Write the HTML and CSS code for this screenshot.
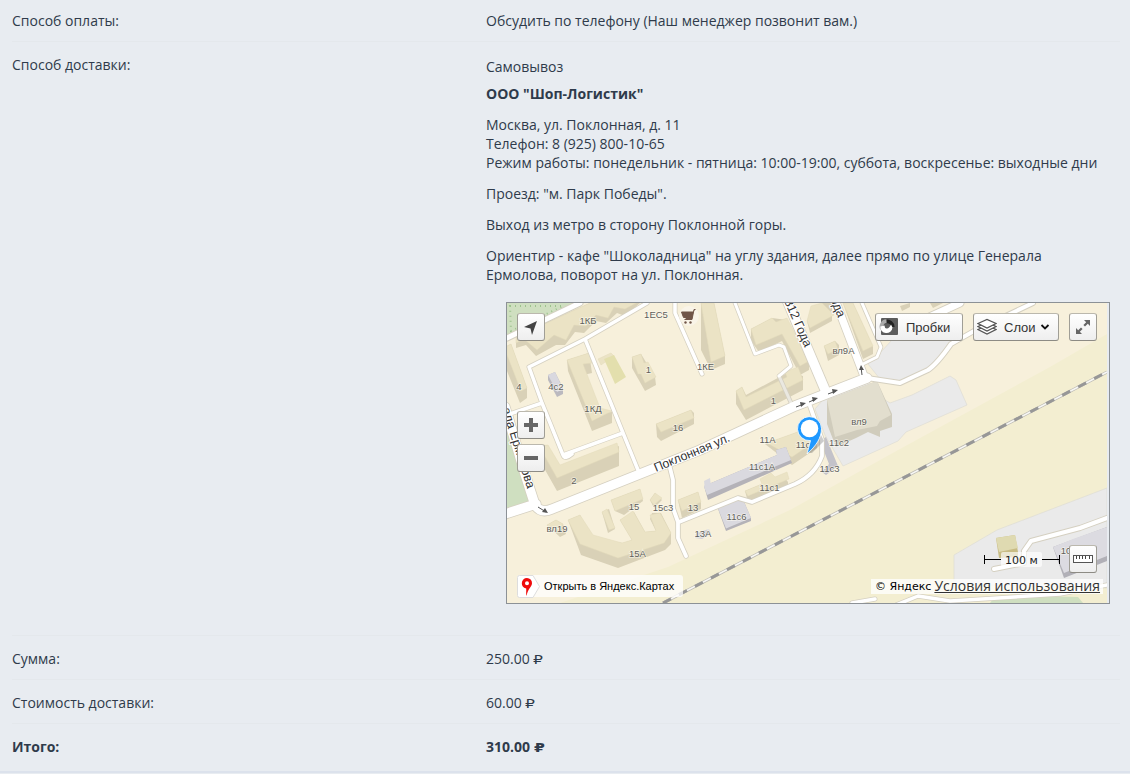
FILE: index.html
```html
<!DOCTYPE html>
<html lang="ru">
<head>
<meta charset="utf-8">
<title>Заказ</title>
<link rel="stylesheet" href="styles.css">
</head>
<body>
<main class="order">
  <div class="row row-first"><div class="label">Способ оплаты:</div><div class="value">Обсудить по телефону (Наш менеджер позвонит вам.)</div></div>
  <div class="row row-delivery">
    <div class="label">Способ доставки:</div>
    <div class="value delivery">
      <div class="method">Самовывоз</div>
      <div class="company">ООО "Шоп-Логистик"</div>
      <p>Москва, ул. Поклонная, д. 11<br>Телефон: 8 (925) 800-10-65<br>Режим работы: понедельник - пятница: 10:00-19:00, суббота, воскресенье: выходные дни</p>
      <p>Проезд: "м. Парк Победы".</p>
      <p>Выход из метро в сторону Поклонной горы.</p>
      <p>Ориентир - кафе "Шоколадница" на углу здания, далее прямо по улице Генерала<br>Ермолова, поворот на ул. Поклонная.</p>
      <div class="map">
        <svg class="canvas" viewBox="507 303 600 300" width="600" height="300">
          <rect x="507" y="303" width="600" height="300" fill="#f7f0db"/>
          <path d="M1107 334L1050 367L900 449L790 510L668 567L560 603H1107Z" fill="#f3eed1"/>
          <path d="M507 303H575L507 335Z" fill="#cfdfc0"/>
          <path d="M510 306H563L511 331Z" fill="none" stroke="#9dc38d" stroke-width="2" stroke-dasharray="1 4"/>
          <path d="M507 415L536 503L507 512Z" fill="#cfdfc0"/>
          <g fill="#eaeaea" stroke="#dedcd4" stroke-width=".7">
            <path d="M815 409L828 394L868 381L880 397L890 403L912 395L950 376L956 380L967 405L906 432L898 441L843 466L825 435Z"/>
            <path d="M868 364L880 353L892 340H952L934 365L902 382L880 379Z"/>
            <path d="M954 584V555L997 530L1107 488V588Z"/>
          </g>
          <path d="M990 603L993 599L1040 596L1078 597L1083 603Z" fill="#cfdfc0"/>
          <g class="walls">
            <path d="M516 348L526 345L536 356L556 345L565 345L575 332L584 333L596 321L606 323L617 313L625 316L640 303H590L516 337Z"/>
            <path d="M507 346L511 344L527 388V398L520 403L507 371Z"/>
            <path d="M567 360L589 353L592 373L583 375L600 413L612 412V423L592 431L568 371Z"/>
            <path d="M632 357L641 354L655 377L656 385L645 391L632 368Z"/>
            <path d="M656 424L691 410L694 413V424L661 441L657 437Z"/>
            <path d="M701 303H714L725 356V364L711 370L701 350Z"/>
            <path d="M751 329L772 318L787 320L809 361V370L800 375L782 341L759 352L751 341Z"/>
            <path d="M736 391L742 387L746 395L787 373L803 376V390L746 420L736 404Z"/>
            <path d="M807 321L822 303H832V321L810 333Z"/>
            <path d="M824 346L835 341L839 345V355L828 361Z"/>
            <path d="M843 303H853L873 347V354L863 359Z"/>
            <path d="M539 446L548 445L555 470L619 446V466L557 491L544 468Z"/>
            <path d="M568 520L580 515L593 540L623 543L632 540L620 520L634 512L645 532L656 531L650 519L652 513L661 513L671 533V544L665 550L618 568L581 555Z"/>
            <path d="M611 500L640 489L643 501L624 515L615 511Z"/>
            <path d="M602 512L609 509L615 529L608 533Z"/>
            <path d="M650 500L655 493L662 500L654 508Z"/>
            <path d="M678 500L698 492L701 503V509L682 518Z"/>
            <path d="M547 525L556 520L563 524L566 534L560 537Z"/>
            <path d="M745 491L762 484L784 477L788 482V486L748 502Z"/>
            <path d="M765 444L806 429L817 436V448L792 465Z"/>
            <path d="M900 306L910 303V307L902 311Z"/>
            <path d="M930 303H943L933 308Z"/>
          </g>
          <path d="M827 400L877 381L892 414V427L880 431V437L868 432L856 438L836 447L827 424Z" fill="#d0ccbc"/>
          <path d="M827 400L877 381L891 415L880 421L877 426L857 430L835 437Z" fill="#e2dece"/>
          <g class="roofs">
            <path d="M516 343L524 339L537 350L554 335L566 340L574 325L586 326L596 315L608 318L614 307L625 309L636 303H590L516 337Z"/>
            <path d="M507 346L511 344L527 388L521 391L507 355Z"/>
            <path d="M567 360L589 353L592 363L583 364L600 408L612 411L592 421Z"/>
            <path d="M598 359L611 353L614 356L601 365Z"/>
            <path d="M632 357L641 354L644 363L648 362L656 377L645 383L641 374H638Z"/>
            <path d="M656 424L691 410L694 418L661 432Z"/>
            <path d="M701 303H714L725 356L711 362Z"/>
            <path d="M751 329L772 318L776 322L787 318L809 361L800 366L782 334L756 345Z"/>
            <path d="M736 391L742 387L746 397L787 377L785 372L798 367L803 380L744 410Z"/>
            <path d="M807 321L811 306L822 303L834 315L810 328Z"/>
            <path d="M824 346L835 341L838 349L828 354Z"/>
            <path d="M843 303H853L873 346L863 351Z"/>
            <path d="M539 446L548 445L560 465L617 443L619 452L557 478Z"/>
            <path d="M568 520L580 515L593 535L622 543L632 540L620 520L633 511L645 532L656 531L650 515L660 513L671 533L664 543L618 558L580 544Z"/>
            <path d="M611 500L640 489L643 499L615 511Z"/>
            <path d="M602 512L607 509L615 528L609 530Z"/>
            <path d="M650 500L655 493L662 498L654 505Z"/>
            <path d="M678 500L698 492L701 502L682 511Z"/>
            <path d="M547 525L556 520L563 524L561 530L550 531Z"/>
            <path d="M745 491L762 484L760 479L771 473L775 477L787 472L789 479L748 496Z"/>
            <path d="M767 443L806 429L817 440L792 457Z"/>
          </g>
          <path d="M604 359L614 355L626 377L615 384Z" fill="#e3dfad"/>
          <path d="M548 375L555 372L563 388V394L557 397L548 380Z" fill="#bbb9bf"/><path d="M548 375L555 372L563 389L557 392Z" fill="#d9d8df"/>
          <path d="M704 486L777 455L776 450L786 447L792 463L708 500Z" fill="#b4b2b8"/><path d="M704 486L777 455L776 450L786 447L791 460L707 495Z" fill="#dad9df"/>
          <path d="M717 506L742 497L751 518V521L726 531Z" fill="#b4b2b8"/><path d="M717 506L742 497L751 518L726 528.500Z" fill="#dad9df"/>
          <path d="M820 441L826 437L838 466L826 475L822 472L829 464Z" fill="#c3c2c9"/>
          <path d="M704 481L710 478L711 486L705 490Z" fill="#dad9df"/>
          <path d="M696 533L709 529L711 534L702 539L695 538Z" fill="#d2d1d6"/>
          <path d="M996 538L1015 535L1018 552V557L999 558Z" fill="#c8bc84"/><path d="M996 538L1015 535L1018 548L999 552Z" fill="#dfdab1"/>
          <path d="M1053 547L1107 527V561L1064 578Z" fill="#b1b0b7"/><path d="M1053 547L1073 539L1107 527V556L1064 573Z" fill="#dcdbe1"/>

          <g class="casing">
            <path d="M507 338L580 303" stroke-width="7"/>
            <path d="M563 455L542 403L529 367L585 339L647 303M507 415L542 403M585 339L638 470M563 455L623 433M563 455Q565 460 572 454M675 303V313L702 374" stroke-width="5"/>
            <path d="M735 303L755 354L779 345L784 347L791 366L779 376L792 405M862 303L881 347L877 357L863 364" stroke-width="4.5"/>
            <path d="M810 406L822 440V456Q815 475 795 484L752 502L738 498L679 522M670 468L673 480V508L678 522V538L686 556" stroke-width="5.5"/>
            <path d="M867 378L900 383L928 370Q937 364 951 344L974 331L1033 303" stroke-width="6"/>
            <path d="M925 319L960 303" stroke-width="9"/>
            <path d="M994 569L1024 563V551L1031 541L1080 528L1107 518" stroke-width="6"/>
            <path d="M852 603L875 599M896 605L918 596L950 601L1060 594L1107 585" stroke-width="5"/>
            <path d="M787 300L826 392" stroke-width="11"/>
            <path d="M835 300L864 376" stroke-width="9"/>
            <path d="M505 407L525 474L535 505Q541 514 552 509L700 450L795 406L867 378M505 514L536 504" stroke-width="11"/>
          </g>
          <g class="roads">
            <path d="M507 338L580 303" stroke-width="5"/>
            <path d="M563 455L542 403L529 367L585 339L647 303M507 415L542 403M585 339L638 470M563 455L623 433M563 455Q565 460 572 454M675 303V313L702 374" stroke-width="3.5"/>
            <path d="M735 303L755 354L779 345L784 347L791 366L779 376M862 303L881 347L877 357L863 364" stroke-width="3"/>
            <path d="M779 376L792 405" stroke-width="3" opacity=".5"/>
            <path d="M810 406L822 440V456Q815 475 795 484L752 502L738 498L679 522M670 468L673 480V508L678 522V538L686 556" stroke-width="3.8"/>
            <path d="M867 378L900 383L928 370Q937 364 951 344L974 331L1033 303" stroke-width="4"/>
            <path d="M925 319L960 303" stroke-width="7"/>
            <path d="M994 569L1024 563V551L1031 541L1080 528L1107 518" stroke-width="4"/>
            <path d="M852 603L875 599M896 605L918 596L950 601L1060 594L1107 585" stroke-width="3.5"/>
            <path d="M787 300L826 392" stroke-width="9.4"/>
            <path d="M835 300L864 376" stroke-width="7.4"/>
            <path d="M505 407L525 474L535 505Q541 514 552 509L700 450L795 406L867 378M505 514L536 504" stroke-width="9.4"/>
          </g>
          <path d="M663 603L1107 372" stroke="#bbb9b3" stroke-width="3"/>
          <path d="M663 603L1107 372" stroke="#f7f7f4" stroke-width="1.6"/>
          <path d="M663 603L1107 372" stroke="#979797" stroke-width="3" stroke-dasharray="9 9"/>
          <g stroke="#555" stroke-width="1" fill="#555">
            <path d="M796 407L804 404M809 402L816 399M828 394L836 391M862 375L861 367M538 507L546 512"/>
            <path stroke="none" d="M800 402L806 403L801 407ZM812 397L818 398L813 402ZM832 389L838 390L833 394ZM859 370L861 365L864 370ZM542 512L548 513L545 508Z"/>
          </g>
          <g class="houses">
            <text x="588" y="324">1КБ</text><text x="656" y="317.500">1ЕС5</text><text x="648.500" y="372.500">1</text><text x="705.500" y="369.500">1КЕ</text>
            <text x="519" y="390">4</text><text x="556" y="389.500">4с2</text><text x="593" y="411.500">1КД</text><text x="678" y="430.500">16</text>
            <text x="773.500" y="403.500">1</text><text x="843.500" y="353.500">вл9А</text><text x="859" y="424.500">вл9</text><text x="767.500" y="443">11А</text>
            <text x="803" y="447.500">11с</text><text x="839" y="445.500">11с2</text><text x="762" y="469.500">11с1А</text><text x="829.500" y="471.500">11с3</text>
            <text x="769.500" y="491">11с1</text><text x="736.500" y="519.500">11с6</text><text x="703" y="537">13А</text><text x="693" y="510.500">13</text>
            <text x="663" y="510.500">15с3</text><text x="634" y="509.500">15</text><text x="574" y="483.500">2</text><text x="557" y="531.500">вл19</text>
            <text x="637.500" y="556.500">15А</text><text x="1066" y="553.500">10</text>
          </g>
          <g class="streets">
            <text transform="translate(656 472) rotate(-22.500)" textLength="81">Поклонная ул.</text>
            <text transform="translate(784 301) rotate(66)">812 Года</text>
            <text transform="translate(830 299) rotate(67)">ода</text>
            <text transform="translate(502 409) rotate(72.500)" textLength="84">ала Ермолова</text>
          </g>
          <circle cx="689" cy="316" r="10" fill="#f8f4e9" opacity=".9"/>
          <path d="M695.500 309.500H694L692 319.500H684.500M681.500 312H693L691.500 317.500H683.500Z" fill="#715649" stroke="#715649" stroke-width="1"/>
          <circle cx="685.500" cy="322.500" r="1.200" fill="#715649"/><circle cx="690.500" cy="322.500" r="1.200" fill="#715649"/>
          <path d="M808 453L821 435L824 441L812 453Z" fill="#555" opacity=".3"/>
          <path d="M807 454L810.500 440.600A12 12 0 1 1 821.500 428.500C821.500 438 816 446 807 454Z" fill="#1e98ff" stroke="#fff" stroke-width=".8"/>
          <circle cx="809.500" cy="428.500" r="8.800" fill="#fff"/>
          <g stroke="#000" stroke-width="1"><path d="M984.500 555V564M1059.500 555V564M984 559.500H1001M1042 559.500H1060"/></g>
          <rect x="1001" y="552" width="41" height="15" rx="2" fill="#fff" opacity=".65"/>
          <text x="1021.500" y="563.500" class="scale">100 м</text>
        </svg>
        <button class="control locate"><svg width="18" height="18"><path d="M15 3L2 9L8.500 10.500L10 17Z" fill="#444"/></svg></button>
        <button class="control plus"><svg width="14" height="14"><path d="M0 7H14M7 0V14" stroke="#666" stroke-width="4"/></svg></button>
        <button class="control minus"><svg width="14" height="14"><path d="M0 7H14" stroke="#666" stroke-width="4"/></svg></button>
        <button class="control traffic"><svg width="20" height="18"><rect x="3" width="17" height="17" rx="1" fill="#5c5c5c"/><path d="M8 3.500A5.600 5.600 0 0 1 14.800 9" fill="none" stroke="#222" stroke-width="3.600"/><path d="M4 11A5.500 5.500 0 0 1 8.500 3" fill="none" stroke="#aaa" stroke-width="3.600"/><path d="M2.300 8.500A6 6 0 0 0 14.500 9.500L13 6.500Q11 11 8.500 10.500Q6.500 10 6.500 7.500Z" fill="#fff"/></svg><span>Пробки</span></button>
        <button class="control layers"><svg width="20" height="18"><g fill="#fff" stroke="#555" stroke-width="1.300"><path d="M1 11.500L10 7.500L19 11.500L10 16Z"/><path d="M1 8.500L10 4.500L19 8.500L10 13Z"/><path d="M1 5.500L10 1.500L19 5.500L10 10Z"/></g></svg><span>Слои</span><svg width="10" height="8"><path d="M1.500 2L5 5.500L8.500 2" fill="none" stroke="#111" stroke-width="1.800"/></svg></button>
        <button class="control full"><svg width="16" height="16"><path d="M15 1V7L12.800 4.800L10 7.600L8.400 6L11.200 3.200L9 1ZM1 15V9L3.200 11.200L6 8.400L7.600 10L4.800 12.800L7 15Z" fill="#666"/></svg></button>
        <button class="control ruler"><svg width="20" height="10"><rect x=".500" y="1.500" width="19" height="7" fill="#fff" stroke="#555"/><path d="M3.500 2V5M6.500 2V5M9.500 2V5M12.500 2V5M16.500 2V5" stroke="#444"/></svg></button>
        <a class="open"><svg width="24" height="23"><path d="M.500 2.500Q.500.500 2.500.500H16L22.500 11.500L16 22.500H2.500Q.500 22.500.500 20.500Z" fill="#fff" stroke="#ddd"/><path fill-rule="evenodd" d="M10 3A5 5 0 0 1 15 8.300C15 12 10.500 14 9.700 21C8.600 19 9.500 15.500 9.200 13.500C6 13 4.800 10.500 4.800 8.200A5.100 5.200 0 0 1 10 3ZM10 6.300A2 2 0 1 0 10 10.300A2 2 0 1 0 10 6.300Z" fill="#f00b0b"/></svg><span>Открыть в Яндекс.Картах</span></a>
        <div class="copyright"><span>© Яндекс</span><a>Условия использования</a></div>
      </div>
    </div>
  </div>
  <div class="row"><div class="label">Сумма:</div><div class="value">250.00 <span class="rub">₽</span></div></div>
  <div class="row"><div class="label">Стоимость доставки:</div><div class="value">60.00 <span class="rub">₽</span></div></div>
  <div class="row total"><div class="label">Итого:</div><div class="value">310.00 <span class="rub">₽</span></div></div>
</main>
</body>
</html>
```
FILE: styles.css
```css
* { box-sizing: border-box; }
body {
  margin: 0;
  background: #e8ecf1;
  color: #2f3b4b;
  font: 14px/19px "Open Sans", "Noto Sans", sans-serif;
}
.order { height: 773px; padding: 0 10px 0 12px; border-bottom: 2px solid #dce2ec; overflow: hidden; }
.row { display: flex; padding: 13px 0 11px; border-bottom: 1px solid #e4e8ec; }
.row-first { padding-top: 11px; }
.total { border-bottom: 0; font-weight: bold; }
.label { width: 474px; flex: none; }
.value { flex: 1; white-space: nowrap; }
.rub { display: inline-block; font: 13px/15px "DejaVu Sans", sans-serif; transform: scaleX(1.2); transform-origin: left; }
.total .rub { font-weight: bold; }
.row-delivery { height: 594px; }
.delivery { padding-top: 2px; }
.company { font-weight: bold; margin-top: 8px; }
.delivery p { margin: 12px 0 0; }
.map {
  position: relative;
  width: 604px;
  height: 302px;
  margin: 18px 0 0 20px;
  border: 1px solid #8c9196;
}
.canvas { display: block; }
.walls path { fill: #d9d1b7; }
.roofs path { fill: #ebe3c5; stroke: #e3dabb; stroke-width: .5; }
.casing, .roads { fill: none; stroke-linecap: round; stroke-linejoin: round; }
.casing { stroke: #d5d0c1; }
.roads { stroke: #fff; }
.houses { font: 9.5px "Liberation Sans", sans-serif; fill: #605e5a; text-anchor: middle; stroke: #fffdf5; stroke-opacity: .6; stroke-width: 1.5px; paint-order: stroke; }
.streets { font: 12.5px "Liberation Sans", sans-serif; fill: #333; stroke: #fff; stroke-width: 2px; paint-order: stroke; }
.scale { font: 11px "DejaVu Sans", sans-serif; fill: #222; text-anchor: middle; }
.control {
  position: absolute;
  display: flex;
  align-items: center;
  justify-content: center;
  width: 28px;
  height: 28px;
  padding: 0;
  border: 1px solid #a09e96;
  border-color: #bbb8ad #a09e96 #8d8b84;
  border-radius: 3px;
  background: linear-gradient(#fff, #eee);
  color: #333;
  font: 13px "Liberation Sans", sans-serif;
}
.locate { left: 10px; top: 10px; }
.plus { left: 10px; top: 108px; }
.minus { left: 10px; top: 141px; }
.traffic { left: 368px; top: 10px; width: 88px; justify-content: flex-start; padding-left: 2px; gap: 8px; }
.layers { left: 466px; top: 10px; width: 86px; justify-content: flex-start; padding-left: 3px; gap: 7px; }
.layers svg:last-child { margin-left: -3px; }
.full { left: 562px; top: 10px; }
.ruler { left: 562px; top: 242px; }
.open {
  position: absolute;
  left: 10px;
  top: 272px;
  display: flex;
  align-items: center;
  gap: 3px;
  width: 166px;
  height: 22px;
  border-radius: 3px;
  background: rgba(255, 255, 255, .75);
  color: #000;
  font: 11px "Liberation Sans", sans-serif;
}
.copyright {
  position: absolute;
  left: 364px;
  top: 276px;
  display: flex;
  gap: 3px;
  width: 232px;
  height: 15px;
  padding-left: 4px;
  background: rgba(255, 255, 255, .75);
  color: #000;
  font: 11px/16px "DejaVu Sans", sans-serif;
}
.copyright a { font: 14px/13px "Open Sans", sans-serif; color: #333; text-decoration: underline; }
```
